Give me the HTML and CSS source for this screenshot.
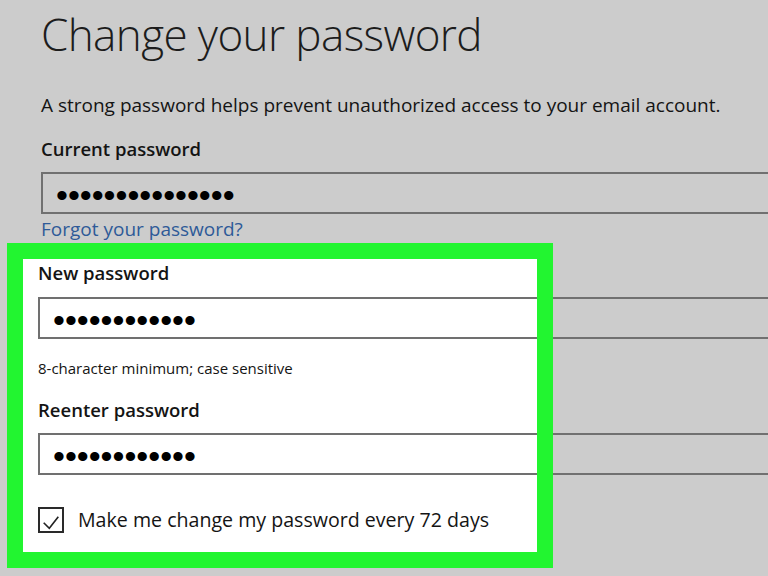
FILE: index.html
```html
<!DOCTYPE html>
<html lang="en">
<head>
<meta charset="utf-8">
<title>Change your password</title>
<link rel="stylesheet" href="styles.css">
</head>
<body>
<main class="page">
  <h1 class="title">Change your password</h1>
  <p class="intro">A strong password helps prevent unauthorized access to your email account.</p>

  <div class="field">
    <label class="label">Current password</label>
    <div class="input"><span class="dots">•••••••••••••••</span></div>
  </div>
  <a class="link" href="#">Forgot your password?</a>

  <section class="highlight">
    <label class="label">New password</label>
    <div class="input input-new"><span class="dots">••••••••••••</span></div>
    <p class="hint">8-character minimum; case sensitive</p>
    <label class="label label-reenter">Reenter password</label>
    <div class="input input-reenter"><span class="dots">••••••••••••</span></div>
    <div class="check-row">
      <span class="checkbox">
        <svg width="22" height="22" viewBox="0 0 22 22"><path d="M3.7 13.7 L9.3 19.3 L18.3 7.7" fill="none" stroke="#222" stroke-width="1.6"/></svg>
      </span>
      <span class="check-label">Make me change my password every 72 days</span>
    </div>
  </section>
</main>
</body>
</html>
```

FILE: styles.css
```css
html, body {
  margin: 0;
  padding: 0;
  background: #cccccc;
}
body {
  width: 768px;
  height: 576px;
  overflow: hidden;
  font-family: "Open Sans", "Noto Sans", sans-serif;
  color: #141414;
}
.page {
  padding: 8px 0 0 41px;
}
.title {
  margin: 0;
  font-size: 44px;
  line-height: 52px;
  font-weight: 300;
  letter-spacing: -0.6px;
  color: #1c1c1c;
}
.intro {
  margin: 33px 0 0;
  font-size: 19px;
  line-height: 24px;
}
.field {
  margin-top: 20px;
}
.label {
  display: block;
  font-size: 18.5px;
  line-height: 24px;
  font-weight: 600;
}
.input {
  margin-top: 11px;
  height: 38px;
  border: 2px solid #707070;
  border-right: none;
  padding-left: 13px;
  display: flex;
  align-items: center;
}
.dots {
  font-family: "Liberation Sans", Arial, sans-serif;
  font-size: 34px;
  line-height: 38px;
  color: #000;
  position: relative;
  top: 2px;
}
.link {
  display: block;
  margin-top: 3px;
  font-size: 19px;
  line-height: 24px;
  color: #2e5a98;
  text-decoration: none;
}
.highlight {
  position: relative;
  isolation: isolate;
  margin: 20px 0 0 -3px;
}
.highlight::before {
  content: "";
  position: absolute;
  z-index: -1;
  left: -31px;
  top: -18px;
  bottom: -35px;
  width: 546px;
  background: #ffffff;
}
.highlight::after {
  content: "";
  position: absolute;
  z-index: 1;
  left: -31px;
  top: -18px;
  bottom: -35px;
  width: 546px;
  box-sizing: border-box;
  border: 16px solid #22f530;
  pointer-events: none;
}
.input-new {
  margin-top: 12px;
}
.hint {
  margin: 19px 0 0;
  font-size: 15px;
  line-height: 20px;
}
.label-reenter {
  margin-top: 20px;
}
.check-row {
  margin-top: 32px;
  display: flex;
  align-items: center;
  gap: 14px;
}
.checkbox {
  width: 22px;
  height: 22px;
  border: 2px solid #2a2a2a;
  display: flex;
}
.check-label {
  font-size: 19.6px;
  line-height: 26px;
  font-weight: 500;
}
```
